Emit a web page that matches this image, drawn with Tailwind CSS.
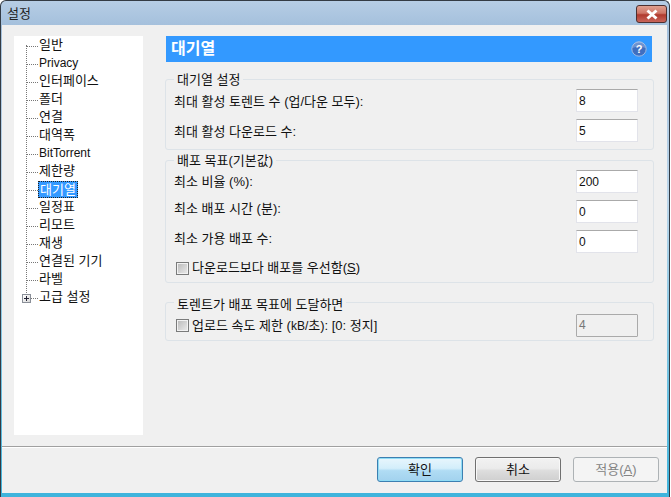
<!DOCTYPE html>
<html lang="ko"><head><meta charset="utf-8"><script src="https://cdn.jsdelivr.net/npm/@tailwindcss/browser@4"></script></head>
<body class="m-0 w-[671px] h-[497px] overflow-hidden bg-white font-['Liberation_Sans','Noto_Sans_CJK_KR',sans-serif] text-[13px] text-[#111]">
<div class="w-[670px] h-[497px] flex flex-col rounded-t-[6px] border-t border-l border-r border-[#333b44] bg-[linear-gradient(to_bottom,#b6cde5_0px,#a4c0dc_25px,#bcd6ea_200px,#3fb4dc_494px)]">
  <div class="h-[24px] shrink-0 flex items-start justify-between pl-[6px] pr-[2px]">
    <span class="mt-[5px] leading-[16px] text-[#222]">설정</span>
    <div class="mt-[4px] w-[31px] h-[18px] rounded-[3px] border border-[#4d3030] bg-[linear-gradient(to_bottom,#e0a090_0%,#cf7566_45%,#b03a2e_55%,#c9655a_100%)] flex items-center justify-center">
      <svg width="16" height="11" viewBox="0 0 16 11"><path d="M3.5 1.5 L12.5 9.5 M12.5 1.5 L3.5 9.5" stroke="#fff" stroke-width="3" stroke-linecap="butt"/></svg>
    </div>
  </div>
  <div class="ml-[1px] w-[665px] h-[468px] shrink-0 bg-[#f0f0f0] flex flex-col">
    <div class="h-[421px] shrink-0 flex pl-[12px] pt-[11px]">
      <div class="relative w-[129px] h-[399px] bg-white shrink-0">
        <div class="absolute left-[12px] top-[9px] h-[250px] border-l border-dotted border-[#777]"></div>
        <div class="flex flex-col">
          <div class="h-[18px] flex items-center"><span class="w-[11px] mt-[2px] ml-[13px] border-t border-dotted border-[#777]"></span><span class="pl-[1px] pr-[2px]">일반</span></div>
          <div class="h-[18px] flex items-center"><span class="w-[11px] mt-[2px] ml-[13px] border-t border-dotted border-[#777]"></span><span class="pl-[1px] pr-[2px] text-[12px]">Privacy</span></div>
          <div class="h-[18px] flex items-center"><span class="w-[11px] mt-[2px] ml-[13px] border-t border-dotted border-[#777]"></span><span class="pl-[1px] pr-[2px]">인터페이스</span></div>
          <div class="h-[18px] flex items-center"><span class="w-[11px] mt-[2px] ml-[13px] border-t border-dotted border-[#777]"></span><span class="pl-[1px] pr-[2px]">폴더</span></div>
          <div class="h-[18px] flex items-center"><span class="w-[11px] mt-[2px] ml-[13px] border-t border-dotted border-[#777]"></span><span class="pl-[1px] pr-[2px]">연결</span></div>
          <div class="h-[18px] flex items-center"><span class="w-[11px] mt-[2px] ml-[13px] border-t border-dotted border-[#777]"></span><span class="pl-[1px] pr-[2px]">대역폭</span></div>
          <div class="h-[18px] flex items-center"><span class="w-[11px] mt-[2px] ml-[13px] border-t border-dotted border-[#777]"></span><span class="pl-[1px] pr-[2px] text-[12px]">BitTorrent</span></div>
          <div class="h-[18px] flex items-center"><span class="w-[11px] mt-[2px] ml-[13px] border-t border-dotted border-[#777]"></span><span class="pl-[1px] pr-[2px]">제한량</span></div>
          <div class="h-[18px] flex items-center"><span class="w-[11px] mt-[2px] ml-[13px] border-t border-dotted border-[#777]"></span><span class="px-[1px] h-[17px] leading-[15px] bg-[#3399ff] text-white border border-dotted border-[#222]">대기열</span></div>
          <div class="h-[18px] flex items-center"><span class="w-[11px] mt-[2px] ml-[13px] border-t border-dotted border-[#777]"></span><span class="pl-[1px] pr-[2px]">일정표</span></div>
          <div class="h-[18px] flex items-center"><span class="w-[11px] mt-[2px] ml-[13px] border-t border-dotted border-[#777]"></span><span class="pl-[1px] pr-[2px]">리모트</span></div>
          <div class="h-[18px] flex items-center"><span class="w-[11px] mt-[2px] ml-[13px] border-t border-dotted border-[#777]"></span><span class="pl-[1px] pr-[2px]">재생</span></div>
          <div class="h-[18px] flex items-center"><span class="w-[11px] mt-[2px] ml-[13px] border-t border-dotted border-[#777]"></span><span class="pl-[1px] pr-[2px]">연결된 기기</span></div>
          <div class="h-[18px] flex items-center"><span class="w-[11px] mt-[2px] ml-[13px] border-t border-dotted border-[#777]"></span><span class="pl-[1px] pr-[2px]">라벨</span></div>
          <div class="relative h-[18px] flex items-center"><span class="w-[11px] mt-[2px] ml-[13px] border-t border-dotted border-[#777]"></span><span class="pl-[1px] pr-[2px]">고급 설정</span>
            <span class="absolute left-[8px] top-[6px] w-[9px] h-[9px] border border-[#8a8f98] bg-[linear-gradient(135deg,#fff,#d8d8d8)] flex items-center justify-center">
              <svg width="7" height="7" viewBox="0 0 7 7"><path d="M1 3.5H6M3.5 1V6" stroke="#223" stroke-width="1"/></svg>
            </span>
          </div>
        </div>
      </div>
      <div class="ml-[22px] w-[489px] shrink-0 flex flex-col">
        <div class="ml-[1px] w-[486px] h-[26px] shrink-0 bg-[#3399ff] flex items-center justify-between pl-[5px] pr-[5px]">
          <span class="text-white font-bold text-[16px] leading-none">대기열</span>
          <svg width="16" height="16" viewBox="0 0 16 16"><circle cx="8" cy="8" r="7.2" fill="#3f6fc0" stroke="#9db8e0"/><path d="M1.5 7 A6.5 6.5 0 0 1 14.5 7 Q8 4.5 1.5 7Z" fill="#fff" opacity=".25"/><text x="8" y="12" font-size="11" font-weight="700" text-anchor="middle" fill="#fff" font-family="Liberation Sans">?</text></svg>
        </div>
        <div class="relative mt-[17px] h-[71px] shrink-0 rounded-[3px] border border-[#dde3e8] pt-[9px] pl-[8px] pr-[15px]">
          <span class="absolute left-[8px] -top-[8px] bg-[#f0f0f0] px-[3px] leading-[15px]">대기열 설정</span>
          <div class="flex items-center justify-between h-[23px]"><span class="mt-[2px]">최대 활성 토렌트 수 (업/다운 모두):</span><span class="w-[62px] h-[23px] pl-[2px] leading-[22px] text-[12px] bg-white border border-t-[#aaa] border-x-[#e2e3ea] border-b-[#e2e3ea]">8</span></div>
          <div class="flex items-center justify-between h-[23px] mt-[7px]"><span class="mt-[2px]">최대 활성 다운로드 수:</span><span class="w-[62px] h-[23px] pl-[2px] leading-[22px] text-[12px] bg-white border border-t-[#aaa] border-x-[#e2e3ea] border-b-[#e2e3ea]">5</span></div>
        </div>
        <div class="relative mt-[10px] h-[123px] shrink-0 rounded-[3px] border border-[#dde3e8] pt-[9px] pl-[8px] pr-[15px]">
          <span class="absolute left-[8px] -top-[8px] bg-[#f0f0f0] px-[3px] leading-[15px]">배포 목표(기본값)</span>
          <div class="flex items-center justify-between h-[23px]"><span>최소 비율 (%):</span><span class="w-[62px] h-[23px] pl-[2px] leading-[22px] text-[12px] bg-white border border-t-[#aaa] border-x-[#e2e3ea] border-b-[#e2e3ea]">200</span></div>
          <div class="flex items-center justify-between h-[23px] mt-[7px]"><span class="-mt-[6px]">최소 배포 시간 (분):</span><span class="w-[62px] h-[23px] pl-[2px] leading-[22px] text-[12px] bg-white border border-t-[#aaa] border-x-[#e2e3ea] border-b-[#e2e3ea]">0</span></div>
          <div class="flex items-center justify-between h-[23px] mt-[7px]"><span class="-mt-[6px]">최소 가용 배포 수:</span><span class="w-[62px] h-[23px] pl-[2px] leading-[22px] text-[12px] bg-white border border-t-[#aaa] border-x-[#e2e3ea] border-b-[#e2e3ea]">0</span></div>
          <div class="flex items-center h-[18px] mt-[6px] ml-[2px] gap-[4px]"><span class="w-[13px] h-[13px] border border-[#7a7b7b] bg-[linear-gradient(135deg,#b8b8b8,#ececec)] shadow-[inset_0_0_0_1px_#f2f2f2]"></span><span class="-ml-[1px]">다운로드보다 배포를 우선함(<span class="underline">S</span>)</span></div>
        </div>
        <div class="relative mt-[19px] h-[39px] shrink-0 rounded-[3px] border border-[#dde3e8] pt-[11px] pl-[8px] pr-[15px]">
          <span class="absolute left-[8px] -top-[6px] bg-[#f0f0f0] px-[3px] leading-[15px]">토렌트가 배포 목표에 도달하면</span>
          <div class="flex items-center justify-between h-[23px]">
            <div class="flex items-center ml-[2px] gap-[4px]"><span class="w-[13px] h-[13px] border border-[#7a7b7b] bg-[linear-gradient(135deg,#b8b8b8,#ececec)] shadow-[inset_0_0_0_1px_#f2f2f2]"></span><span class="-ml-[1px]">업로드 속도 제한 (<span class="text-[12px]">kB/</span>초): [0: 정지]</span></div>
            <span class="w-[62px] h-[23px] pl-[2px] leading-[21px] text-[12px] text-[#777] bg-[#f0f0f0] border border-[#aaa] rounded-[1px]">4</span>
          </div>
        </div>
      </div>
    </div>
    <div class="flex-1 border-t border-[#a0a0a0] shadow-[inset_0_1px_0_#fff] flex justify-end gap-[12px] pt-[10px] pr-[8px]">
      <div class="w-[86px] h-[25px] rounded-[3px] border border-[#3c7fb1] shadow-[inset_0_0_0_1px_#8fdcf5] bg-[linear-gradient(to_bottom,#e8f6fd_0%,#d3eefb_45%,#b0dcf4_55%,#a2d2ee_100%)] flex items-center justify-center">확인</div>
      <div class="w-[86px] h-[25px] rounded-[3px] border border-[#707070] shadow-[inset_0_0_0_1px_#f8f8f8] bg-[linear-gradient(to_bottom,#f2f2f2_0%,#ebebeb_45%,#dddddd_55%,#cfcfcf_100%)] flex items-center justify-center">취소</div>
      <div class="w-[86px] h-[25px] rounded-[3px] border border-[#adb2b5] bg-[#f4f4f4] text-[#838383] flex items-center justify-center"><span>적용(<span class="underline">A</span>)</span></div>
    </div>
  </div>
</div>
</body></html>
